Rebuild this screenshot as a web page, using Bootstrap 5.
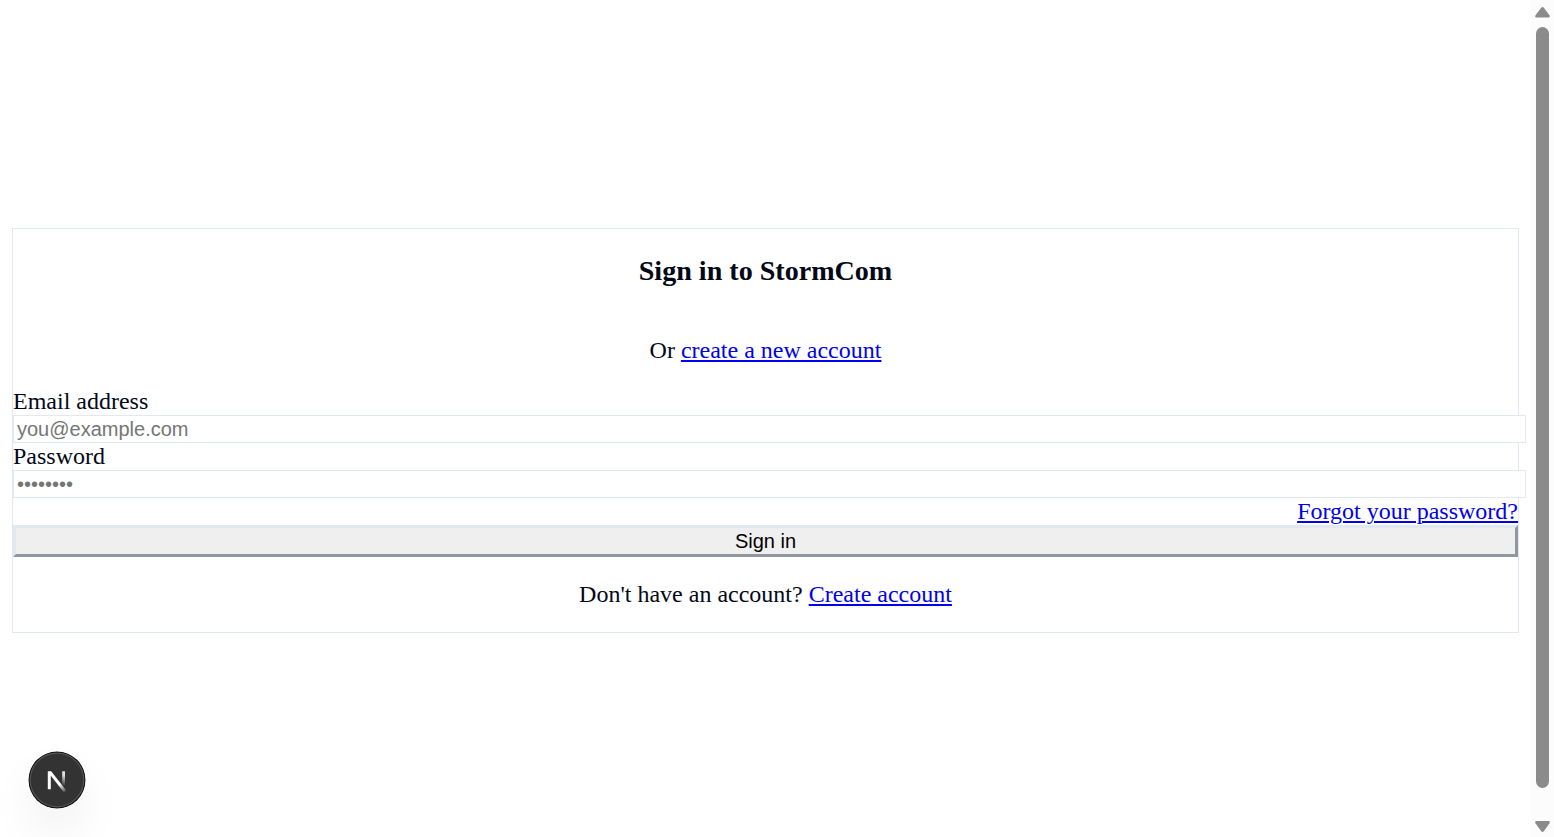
<!DOCTYPE html>
<html lang="en">
<head>
<meta charset="utf-8">
<title>Sign in to StormCom</title>
<link rel="stylesheet" href="https://cdn.jsdelivr.net/npm/bootstrap@5.3.0/dist/css/bootstrap.min.css">
<style>
  body { font: 24px/27px "Liberation Serif", "Times New Roman", serif; color: #020817; background: #fff; }
  a { color: #0000ee; text-decoration-thickness: 2px; text-underline-offset: 2px; }
  .page { padding: 0 12px; }
  .signin { margin-top: 228px; height: 405px; border: 1px solid #e2e8f0; background: #fff; }
  .signin h3 { font-size: 28.08px; line-height: 32px; font-weight: 700; margin: 26px 0 50px; }
  .signin p { margin-bottom: 24px; }
  .field { width: calc(100% + 8px); height: 28px; padding: 2px 3px; border: 1px solid #e2e8f0; background: #fff; font: 20px/22px "Liberation Sans", Arial, sans-serif; }
  .field::placeholder { color: #757575; opacity: 1; }
  .submit { height: 32px; border: 3px solid; border-color: #e2e8f0 #91979e #91979e #e2e8f0; background: #efefef; color: #000; font: 20px/22px "Liberation Sans", Arial, sans-serif; padding: 0 0 1px; }
  .scroll { width: 23px; background: #fcfcfc; padding: 7px 0 5px; }
  .thumb { width: 13px; height: 761px; border-radius: 7px; background: #8b8b8b; margin-top: 9px; }
  .dev { left: 28px; top: 751px; width: 58px; height: 58px; }
  .dev svg { display: block; border-radius: 50%; box-shadow: 0 24px 48px -4px rgba(0,0,0,.08); }
</style>
<script src="https://cdn.jsdelivr.net/npm/bootstrap@5.3.0/dist/js/bootstrap.bundle.min.js"></script>
</head>
<body class="vh-100 overflow-hidden d-flex">
  <main class="page flex-grow-1">
    <div class="signin">
      <div class="text-center">
        <h3>Sign in to StormCom</h3>
        <p>Or <a href="#">create a new account</a></p>
      </div>
      <form>
        <label class="d-block" for="email">Email address</label>
        <input class="field d-block" id="email" type="email" placeholder="you@example.com">
        <label class="d-block" for="password">Password</label>
        <input class="field d-block" id="password" type="password" placeholder="••••••••">
        <div class="text-end"><a href="#">Forgot your password?</a></div>
        <button class="submit d-block w-100" type="button">Sign in</button>
      </form>
      <p class="text-center mt-4">Don't have an account? <a href="#">Create account</a></p>
    </div>
  </main>
  <div class="scroll d-flex flex-column align-items-center flex-shrink-0" aria-hidden="true">
    <svg width="15" height="11" viewBox="0 0 15 11"><path d="M6 1Q7.500-.8 9 1L14.500 8.300Q15.500 10.500 13.500 10.500H1.500Q-.5 10.500.5 8.300Z" fill="#8b8b8b"/></svg>
    <div class="thumb"></div>
    <svg class="mt-auto" width="15" height="11" viewBox="0 0 15 11"><path d="M6 10Q7.500 11.800 9 10L14.500 2.200Q15.500 0 13.500 0H1.500Q-.5 0 .5 2.200Z" fill="#8b8b8b"/></svg>
  </div>
  <div class="dev position-absolute">
    <svg width="58" height="58" viewBox="0 0 58 58">
      <defs>
        <linearGradient id="stem" x1="0" y1="24" x2="0" y2="35" gradientUnits="userSpaceOnUse"><stop stop-color="#fff" stop-opacity=".85"/><stop offset="1" stop-color="#fff" stop-opacity="0"/></linearGradient>
        <linearGradient id="diag" x1="32" y1="33" x2="38" y2="42" gradientUnits="userSpaceOnUse"><stop stop-color="#fff"/><stop offset="1" stop-color="#fff" stop-opacity="0"/></linearGradient>
      </defs>
      <circle cx="29" cy="29" r="28.500" fill="#111"/>
      <circle cx="29" cy="29" r="26.800" fill="#333" stroke="#555" stroke-width="1.200"/>
      <path d="M35.600 20.300V35" stroke="url(#stem)" stroke-width="2.800" fill="none"/>
      <path d="M19.800 20.200H23.200L38.200 39.400L35.800 41.200L22.800 24.800V38.200H19.800Z" fill="url(#diag)"/>
    </svg>
  </div>
</body>
</html>
